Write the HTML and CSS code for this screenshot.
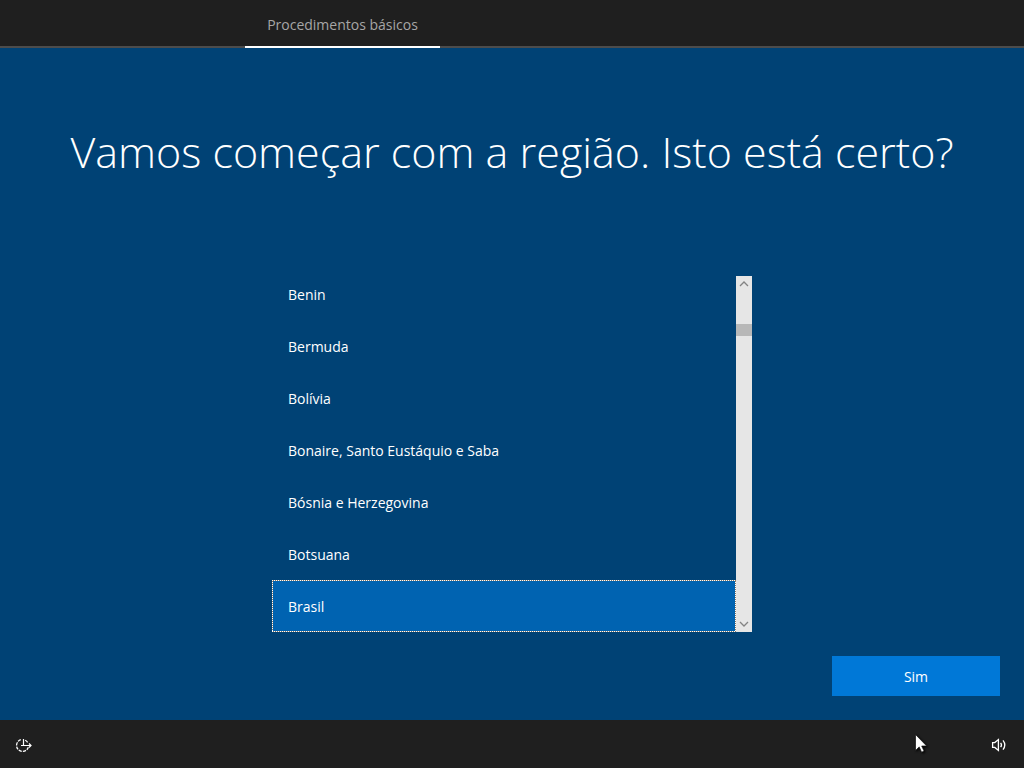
FILE: index.html
```html
<!DOCTYPE html>
<html lang="pt-BR">
<head>
<meta charset="utf-8">
<meta name="viewport" content="width=device-width, initial-scale=1">
<title>Procedimentos básicos</title>
<link rel="stylesheet" href="styles.css">
</head>
<body>
<header class="topbar">
  <nav class="tabs"><a class="tab" href="#regiao" aria-current="step">Procedimentos básicos</a></nav>
</header>
<main class="stage" id="regiao">
  <h1 class="title" id="title">Vamos começar com a região. Isto está certo?</h1>
  <form class="form">
    <div class="picker">
      <div class="regions" role="radiogroup" aria-labelledby="title">
        <label class="region"><input class="radio" type="radio" name="region">Benin</label>
        <label class="region"><input class="radio" type="radio" name="region">Bermuda</label>
        <label class="region"><input class="radio" type="radio" name="region">Bolívia</label>
        <label class="region"><input class="radio" type="radio" name="region">Bonaire, Santo Eustáquio e Saba</label>
        <label class="region"><input class="radio" type="radio" name="region">Bósnia e Herzegovina</label>
        <label class="region"><input class="radio" type="radio" name="region">Botsuana</label>
        <label class="region"><input class="radio" type="radio" name="region" checked>Brasil</label>
      </div>
      <div class="scrollbar">
        <button class="arrow" type="button" aria-label="Rolar para cima"><svg width="16" height="16" viewBox="0 0 16 16"><path d="M4 10l4-4 4 4" fill="none" stroke="#838383" stroke-width="1.3"/></svg></button>
        <div class="track"><div class="thumb"></div></div>
        <button class="arrow" type="button" aria-label="Rolar para baixo"><svg width="16" height="16" viewBox="0 0 16 16"><path d="M4 6l4 4 4-4" fill="none" stroke="#838383" stroke-width="1.3"/></svg></button>
      </div>
    </div>
    <div class="actions"><button class="primary" type="button">Sim</button></div>
  </form>
</main>
<footer class="bottombar">
  <button class="tool" type="button" aria-label="Facilidade de acesso">
    <svg width="18" height="16" viewBox="0 0 18 16" fill="none" stroke="#fff">
      <path d="M5.8 2.7A6 6 0 1 0 13.3 10.2" stroke-width="1.3" stroke-dasharray="3.2 1.1"/>
      <path d="M10.2 3.2A6 6 0 0 1 12.6 5.4" stroke-width="1.2"/>
      <path d="M8.5 2v6.5M6 8.5h10M14 6.5l2 2-2 2" stroke-width="1.2"/>
    </svg>
  </button>
  <button class="tool" type="button" aria-label="Volume">
    <svg width="16" height="16" viewBox="0 0 16 16" fill="none" stroke="#fff" stroke-width="1.3">
      <path d="M1.6 5.6h2.2L7.4 2.6v10.8l-3.6-3H1.6z"/>
      <path d="M9.6 5.8q1.8 2.2 0 4.4"/>
      <path d="M12 3.4q3.6 4.6 0 9.2"/>
    </svg>
  </button>
  <svg class="pointer" width="12" height="19" viewBox="0 0 12 19"><path d="M.5.5v16l3.7-3.6 2.4 5.3 2.5-1.1-2.4-5.1h5z" fill="#fff" stroke="#111" stroke-width=".7"/></svg>
</footer>
</body>
</html>
```
FILE: styles.css
```css
* { box-sizing: border-box; }
body {
  margin: 0;
  min-height: 100vh;
  display: grid;
  grid-template-rows: 48px 1fr 48px;
  background: #004275;
  color: #fff;
  font: 14px/22px "Open Sans", "Noto Sans", sans-serif;
}
button { margin: 0; padding: 0; border: 0; background: none; color: inherit; font: inherit; }
svg { display: block; }
.topbar { background: #1f1f1f; box-shadow: inset 0 -2px #4c4c4c; padding-left: 245px; }
.tabs { display: flex; height: 100%; }
.tab {
  display: flex;
  align-items: center;
  justify-content: center;
  min-width: 195px;
  padding-top: 4px;
  border-bottom: 2px solid #fff;
  color: #a6a6a6;
  text-decoration: none;
}
.stage { display: flex; flex-direction: column; padding: 72px 24px 24px; }
.title {
  margin: 0;
  text-align: center;
  font-size: 43px;
  line-height: 64px;
  font-weight: 300;
}
.form { flex: 1; display: flex; flex-direction: column; justify-content: flex-end; gap: 24px; }
.picker { display: flex; width: 100%; max-width: 480px; height: 356px; margin: 0 auto; }
.regions { flex: 1; display: flex; flex-direction: column; justify-content: flex-end; overflow: hidden; }
.region {
  position: relative;
  flex: none;
  height: 52px;
  padding: 15px;
  border: 1px solid transparent;
}
.region:has(:checked) {
  background:
    repeating-linear-gradient(90deg, #fff 0 1px, #8a7a66 1px 2px) top / 100% 1px no-repeat border-box,
    repeating-linear-gradient(90deg, #fff 0 1px, #8a7a66 1px 2px) bottom / 100% 1px no-repeat border-box,
    repeating-linear-gradient(#fff 0 1px, #8a7a66 1px 2px) left / 1px 100% no-repeat border-box,
    repeating-linear-gradient(#fff 0 1px, #8a7a66 1px 2px) right / 1px 100% no-repeat border-box,
    #0063b1;
}
.radio { position: absolute; opacity: 0; margin: 0; }
.scrollbar { width: 16px; display: flex; flex-direction: column; background: #e6e6e6; }
.track { flex: 1; padding-top: 32px; }
.thumb { height: 12px; background: #b8b8b8; }
.actions { display: flex; justify-content: flex-end; }
.primary { width: 168px; height: 40px; padding-top: 2px; background: #0078d7; }
.bottombar {
  position: relative;
  display: flex;
  align-items: center;
  justify-content: space-between;
  padding: 2px 17px 0 15px;
  background: #1f1f1f;
}
.pointer { position: absolute; top: 14px; right: 97px; filter: drop-shadow(1px 1px 1px #000); }
```
